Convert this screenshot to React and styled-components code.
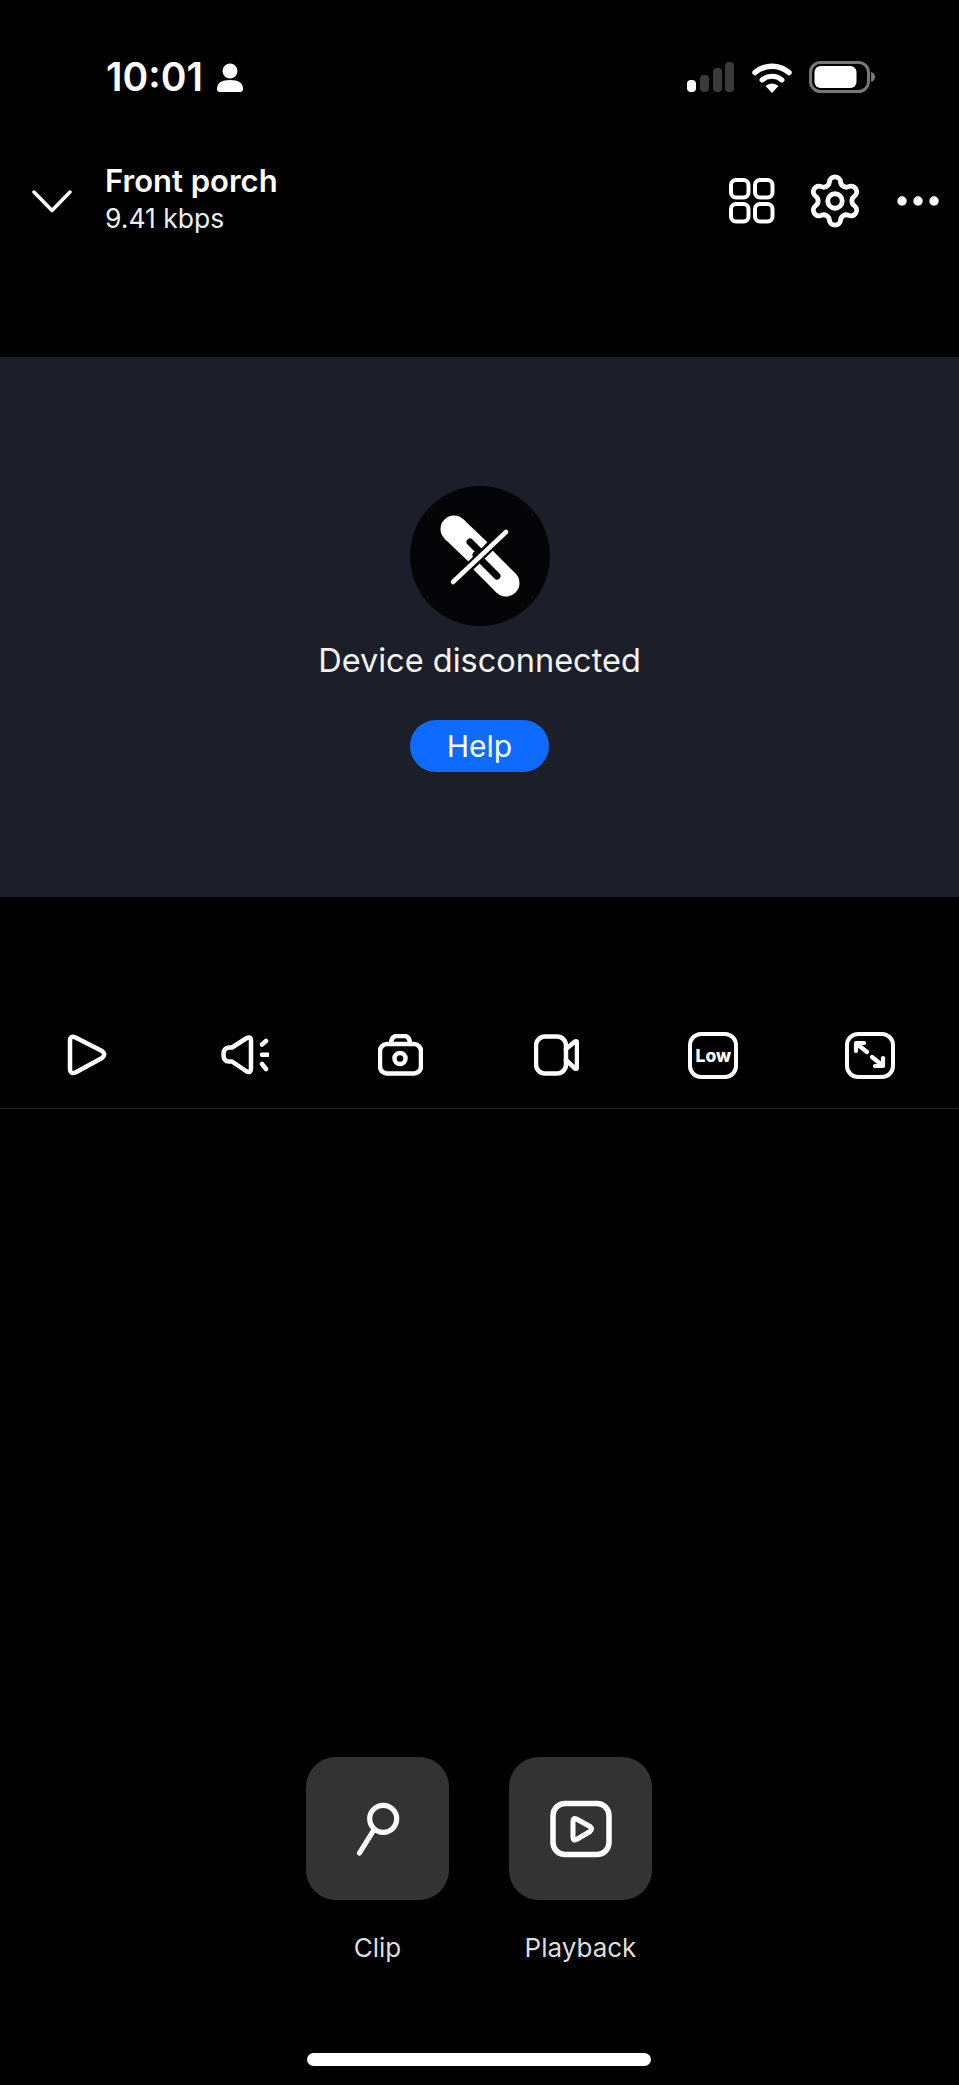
import React from "react";
import styled, { createGlobalStyle } from "styled-components";
import { Settings } from "lucide-react";

const GlobalStyle = createGlobalStyle`
  html, body {
    margin: 0;
    padding: 0;
    background: #000;
  }
  body {
    font-family: Inter, "Noto Sans", "Liberation Sans", sans-serif;
    color: #fff;
  }
`;

const Page = styled.div`
  width: 959px;
  height: 2085px;
  background: #000;
  display: flex;
  flex-direction: column;
  overflow: hidden;
`;

const StatusBar = styled.div`
  height: 32px;
  margin-top: 61px;
  padding: 0 84px 0 106px;
  display: flex;
  align-items: center;
  justify-content: space-between;
`;

const StatusLeft = styled.div`
  display: flex;
  align-items: center;
  gap: 13px;
`;

const StatusRight = styled.div`
  display: flex;
  align-items: center;
  gap: 17px;
`;

const Time = styled.span`
  font-size: 39px;
  font-weight: 600;
  line-height: 32px;
`;

const Header = styled.header`
  height: 64px;
  margin-top: 76px;
  padding: 0 20px 0 32px;
  display: flex;
  align-items: center;
`;

const TitleBlock = styled.div`
  margin-left: 33px;
  flex: 1;
`;

const Title = styled.div`
  font-size: 31px;
  font-weight: 600;
  line-height: 24px;
  margin-bottom: 10px;
`;

const Bitrate = styled.div`
  font-size: 26.5px;
  line-height: 30px;
  color: #eee;
`;

const HeaderActions = styled.div`
  display: flex;
  align-items: center;
  gap: 37px;
`;

const GearIcon = styled(Settings)`
  margin: 0 -4px 0 -6px;
`;

const VideoPanel = styled.section`
  height: 540px;
  margin-top: 124px;
  background: #1c1e2a;
  display: flex;
  flex-direction: column;
  align-items: center;
  padding-top: 129px;
  box-sizing: border-box;
`;

const Badge = styled.div`
  width: 140px;
  height: 140px;
  border-radius: 50%;
  background: #050507;
`;

const PanelText = styled.div`
  margin-top: 15px;
  font-size: 32.5px;
  line-height: 40px;
  color: #f4f4f4;
`;

const HelpButton = styled.button`
  margin-top: 39px;
  width: 139px;
  height: 52px;
  border: 0;
  border-radius: 26px;
  background: #0f6bff;
  color: #fff;
  font: 400 30px Inter, sans-serif;
`;

const Toolbar = styled.div`
  height: 46px;
  padding: 135px 64px 30px 62px;
  border-bottom: 1px solid #222;
  display: flex;
  align-items: center;
  justify-content: space-between;
`;

const ToolSlot = styled.div`
  width: 50px;
  height: 47px;
  display: flex;
  align-items: center;
  justify-content: center;
`;

const SquareIcon = styled.div`
  width: 50px;
  height: 47px;
  box-sizing: border-box;
  border: 4.5px solid #fff;
  border-radius: 13px;
  display: flex;
  align-items: center;
  justify-content: center;
  font-size: 17.5px;
  font-weight: 800;
`;

const Actions = styled.div`
  margin-top: auto;
  display: flex;
  justify-content: center;
  gap: 60px;
  padding-right: 1px;
`;

const Action = styled.div`
  width: 143px;
  display: flex;
  flex-direction: column;
  align-items: center;
`;

const Tile = styled.div`
  width: 143px;
  height: 143px;
  border-radius: 30px;
  background: #333;
  display: flex;
  align-items: center;
  justify-content: center;
`;

const ActionLabel = styled.div`
  margin-top: 32px;
  font-size: 26px;
  line-height: 32px;
  color: #ddd;
  white-space: nowrap;
`;

const HomeIndicator = styled.div`
  width: 344px;
  height: 13px;
  margin: 89px 0 19px 307px;
  border-radius: 7px;
  background: #fff;
`;

const stroke = {
  fill: "none",
  stroke: "#fff",
  strokeLinecap: "round",
  strokeLinejoin: "round",
};

const PersonIcon = () => (
  <svg width="28" height="29" viewBox="0 0 28 29" fill="#fff">
    <circle cx="14" cy="8" r="7.5" />
    <path d="M1 26 Q1 17 14 17 Q27 17 27 26 Q27 29 24 29 H4 Q1 29 1 26 Z" />
  </svg>
);

const SignalIcon = () => (
  <svg width="48" height="30" viewBox="0 0 48 30">
    <rect x="0" y="18" width="9" height="12" rx="4" fill="#fff" />
    <rect x="13" y="13" width="9" height="17" rx="4" fill="#3a3a3a" />
    <rect x="26" y="6" width="9" height="24" rx="4" fill="#3a3a3a" />
    <rect x="38" y="0" width="9" height="30" rx="4" fill="#3a3a3a" />
  </svg>
);

const WifiIcon = () => (
  <svg width="40" height="31" viewBox="0 0 40 31">
    <path d="M3 10.5 A26 26 0 0 1 37 10.5" {...stroke} strokeWidth="5.5" />
    <path d="M10 18 A15.5 15.5 0 0 1 30 18" {...stroke} strokeWidth="5" />
    <path d="M20 31 L13.5 24 A9.5 9.5 0 0 1 26.5 24 Z" fill="#fff" />
  </svg>
);

const BatteryIcon = () => (
  <svg width="66" height="32" viewBox="0 0 66 32">
    <rect x="1.5" y="1.5" width="58" height="29" rx="10" fill="none" stroke="#777" strokeWidth="3" />
    <rect x="5.5" y="5" width="42" height="22" rx="6" fill="#fff" />
    <path d="M62 11 Q66 12 66 16 Q66 20 62 21 Z" fill="#777" />
  </svg>
);

const ChevronIcon = () => (
  <svg width="40" height="23" viewBox="0 0 40 23">
    <path d="M2 2 L20 20.5 L38 2" {...stroke} strokeWidth="3.5" />
  </svg>
);

const GridIcon = () => (
  <svg width="46" height="46" viewBox="0 0 46 46">
    <g {...stroke} strokeWidth="4">
      <rect x="2" y="2" width="17.5" height="17.5" rx="5" />
      <rect x="26" y="2" width="17.5" height="17.5" rx="5" />
      <rect x="2" y="26" width="17.5" height="17.5" rx="5" />
      <rect x="26" y="26" width="17.5" height="17.5" rx="5" />
    </g>
  </svg>
);

const DotsIcon = () => (
  <svg width="42" height="10" viewBox="0 0 42 10" fill="#fff">
    <circle cx="5" cy="5" r="4.7" />
    <circle cx="21" cy="5" r="4.7" />
    <circle cx="37" cy="5" r="4.7" />
  </svg>
);

const BrokenLinkIcon = () => (
  <svg width="140" height="140" viewBox="0 0 140 140">
    <g fill="none">
      <circle cx="44" cy="43" r="13.5" fill="#fff" />
      <path d="M44 43 L68 66" stroke="#fff" strokeWidth="27" />
      <path d="M60 56 L76 72" stroke="#050507" strokeWidth="7" strokeLinecap="round" />
      <circle cx="96" cy="97" r="13.5" fill="#fff" />
      <path d="M96 97 L73 74" stroke="#fff" strokeWidth="27" />
      <path d="M87 90 L66 69" stroke="#050507" strokeWidth="7" strokeLinecap="round" />
      <path d="M43 96 L96 46" stroke="#050507" strokeWidth="9" />
      <path d="M43 96 L96 46" stroke="#fff" strokeWidth="4.5" strokeLinecap="round" />
    </g>
  </svg>
);

const PlayIcon = () => (
  <svg width="40" height="42" viewBox="0 0 40 42">
    <path d="M3 7 Q3 1 8.5 3.5 L35 17 Q39.5 20.5 35 24 L8.5 38.5 Q3 40.5 3 35 Z" {...stroke} strokeWidth="4.5" />
  </svg>
);

const SpeakerIcon = () => (
  <svg width="50" height="42" viewBox="-2 0 50 42">
    <g {...stroke} strokeWidth="4.5">
      <path d="M25 4.5 L11 13.5 H8 Q2.5 14 2.5 20.5 Q2.5 27.5 8 27.5 H11 L25 37 Q30 40 30 34 V7 Q30 1.5 25 4.5 Z" />
      <path d="M41 10.5 L45 7" />
      <path d="M41 20.7 H47" />
      <path d="M41 30 L45 35" />
    </g>
  </svg>
);

const CameraIcon = () => (
  <svg width="45" height="42" viewBox="0 0 45 42">
    <g {...stroke} strokeWidth="4.5">
      <rect x="2" y="10" width="41" height="29.5" rx="7" />
      <path d="M13 10 Q13 2 19 2 H26 Q32 2 32 10" />
      <circle cx="22" cy="24.5" r="5.5" />
    </g>
  </svg>
);

const VideoIcon = () => (
  <svg width="45" height="42" viewBox="0 0 45 42">
    <g {...stroke} strokeWidth="4.5">
      <rect x="2" y="2.5" width="30" height="37" rx="9" />
      <path d="M32 15 L41 7.5 Q43 6.5 43 9 V33 Q43 35.5 41 34.5 L32 26" />
    </g>
  </svg>
);

const ExpandArrows = () => (
  <svg width="41" height="38" viewBox="0 0 41 38">
    <g {...stroke} strokeWidth="4.2">
      <path d="M7 15 V7 H15" />
      <path d="M8 8 L18 16" />
      <path d="M23 21 L33 29" />
      <path d="M34 22 V30 H26" />
    </g>
  </svg>
);

const ClipIcon = () => (
  <svg width="56" height="56" viewBox="0 0 56 56">
    <g {...stroke} strokeWidth="5.2">
      <circle cx="33.2" cy="17.8" r="13.5" />
      <path d="M23.5 29.5 L9.5 52" />
    </g>
  </svg>
);

const PlaybackIcon = () => (
  <svg width="62" height="58" viewBox="0 0 62 58">
    <rect x="3" y="3.5" width="56" height="51" rx="12" {...stroke} strokeWidth="5.5" />
    <path d="M23 21 Q23 17.5 26.5 19 L40 26.5 Q43 29 40 31.5 L26.5 39.5 Q23 41 23 37.5 Z" {...stroke} strokeWidth="5" />
  </svg>
);

const tools = [
  { name: "play", icon: <PlayIcon /> },
  { name: "sound", icon: <SpeakerIcon /> },
  { name: "snapshot", icon: <CameraIcon /> },
  { name: "record", icon: <VideoIcon /> },
  { name: "quality", icon: <SquareIcon>Low</SquareIcon> },
  {
    name: "fullscreen",
    icon: (
      <SquareIcon>
        <ExpandArrows />
      </SquareIcon>
    ),
  },
];

const App = () => (
  <Page>
    <GlobalStyle />
    <StatusBar>
      <StatusLeft>
        <Time>10:01</Time>
        <PersonIcon />
      </StatusLeft>
      <StatusRight>
        <SignalIcon />
        <WifiIcon />
        <BatteryIcon />
      </StatusRight>
    </StatusBar>
    <Header>
      <ChevronIcon />
      <TitleBlock>
        <Title>Front porch</Title>
        <Bitrate>9.41 kbps</Bitrate>
      </TitleBlock>
      <HeaderActions>
        <GridIcon />
        <GearIcon size={58} color="#fff" strokeWidth={2} />
        <DotsIcon />
      </HeaderActions>
    </Header>
    <VideoPanel>
      <Badge>
        <BrokenLinkIcon />
      </Badge>
      <PanelText>Device disconnected</PanelText>
      <HelpButton>Help</HelpButton>
    </VideoPanel>
    <Toolbar>
      {tools.map(tool => (
        <ToolSlot key={tool.name}>{tool.icon}</ToolSlot>
      ))}
    </Toolbar>
    <Actions>
      <Action>
        <Tile>
          <ClipIcon />
        </Tile>
        <ActionLabel>Clip</ActionLabel>
      </Action>
      <Action>
        <Tile>
          <PlaybackIcon />
        </Tile>
        <ActionLabel>Playback</ActionLabel>
      </Action>
    </Actions>
    <HomeIndicator />
  </Page>
);

export default App;
